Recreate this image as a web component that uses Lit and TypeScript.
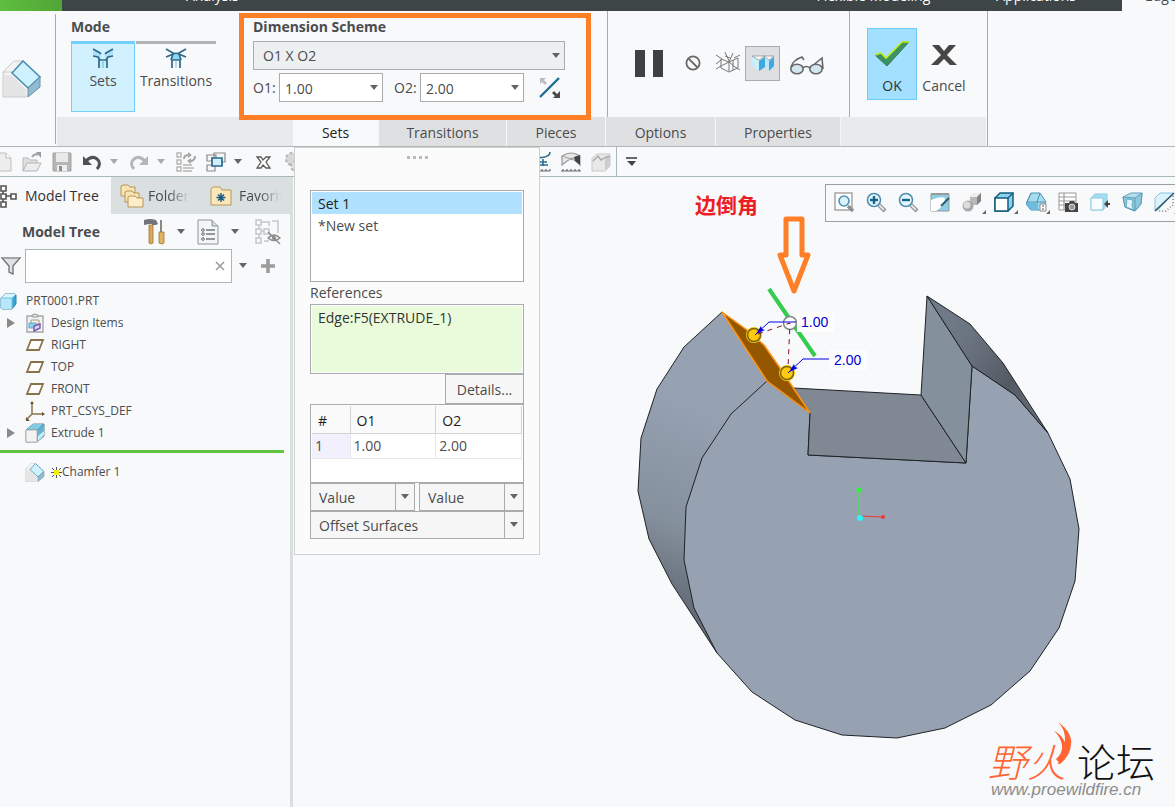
import { LitElement, html, svg, css, type TemplateResult } from "lit";
import { customElement, property, state } from "lit/decorators.js";
import { classMap } from "lit/directives/class-map.js";

interface IconDef {
  w: number;
  h: number;
  art: TemplateResult;
}

const glass = svg`<path d="M13 13l6 6" stroke="#8f8f8f" stroke-width="4"/><path d="M13 13l5 5" stroke="#e4e4e4" stroke-width="2"/><circle cx="8" cy="8" r="6.5" fill="#e6f6fd" stroke="#4d91b3" stroke-width="1.6"/>`;
const flyout = svg`<path d="M24 18v4h-4z" fill="#666"/>`;
const chamferBlock = svg`<path d="M1 12L12 1h9L37 17v13L25 37H1z" fill="#f3f3f4"/><path d="M2 13h8L26 28v9H2z" fill="#e5e5e6"/><path d="M1 12L12 1h9M1 12v25h24M1 12h9" fill="none" stroke="#c9cacb"/><path d="M3 14h7L25 29v6" fill="none" stroke="#fafafa" stroke-width="1.5"/><path d="M10 13L21 1l17 16-12 11z" fill="#cdf1ff" stroke="#4b8fae" stroke-width="1.6"/><path d="M26 28l12-11v10L26 37z" fill="#8dbdd2" stroke="#6f8f9c"/>`;

const ICONS: Record<string, IconDef> = {
  chamfer: { w: 40, h: 38, art: chamferBlock },
  caret: { w: 10, h: 6, art: svg`<path d="M1 0h8L5 5z" fill="#646464"/>` },
  caretDim: { w: 10, h: 6, art: svg`<path d="M1 0h8L5 5z" fill="#a9a9a9"/>` },
  sets: {
    w: 22, h: 20,
    art: svg`<path d="M1 1l8 4v5L1 8zM21 1l-8 4v5l8-2z" fill="#a9e2fa"/><path d="M7 12h8v8H7z" fill="#c3ecfc"/><path d="M1 1l7 4 1 1M1 8l5 1 2 3M21 1l-7 4-1 1M21 8l-5 1-2 3M7 20v-8h8v8" fill="none" stroke="#2d6a87" stroke-width="1.700"/><path d="M11 12v8" stroke="#7eb8d0"/>`,
  },
  transitions: {
    w: 22, h: 20,
    art: svg`<path d="M8 5l3 1 3-1 2 7H6z" fill="#8ed8f7"/><path d="M1 1l7 4q3 1 6 0l7-4M1 9l5-2 3-2M21 9l-5-2-3-2M7 20v-8h8v8M8 6l-2 6M14 6l2 6" fill="none" stroke="#2d6a87" stroke-width="1.700"/><path d="M11 12v8" stroke="#7eb8d0"/>`,
  },
  flip: {
    w: 22, h: 22,
    art: svg`<path d="M1 20L20 1" stroke="#1f6f93" stroke-width="2.4"/><path d="M1 1h6L5 3l3 3-2 2-3-3-2 2z" fill="#bdbdbd"/><path d="M21 21h-7l2-2-3-3 2-2 3 3 3-3z" fill="#4a4a4a"/>`,
  },
  pause: { w: 28, h: 27, art: svg`<path d="M0 0h10v27H0zM18 0h10v27H18z" fill="#3f4041"/>` },
  none: { w: 16, h: 16, art: svg`<circle cx="8" cy="8" r="6.6" fill="none" stroke="#686868" stroke-width="1.8"/><path d="M3.5 3.5l9 9" stroke="#686868" stroke-width="1.8"/>` },
  wire: {
    w: 24, h: 22,
    art: svg`<path d="M5 7l8 3 9-4M13 10v9M5 7v9l8 4 9-4V6M9 4l5 2M0 3l6 4M0 12l5-4M9 0l4 9M17 1l-4 9M24 3l-6 3M0 17l5-3 8-4M24 18l-5-3-6-5M17 8v10" fill="none" stroke="#777" stroke-width="1"/>`,
  },
  boxes: {
    w: 24, h: 18,
    art: svg`<path d="M1 2h13L8 6zM13 2h10l-5 4z" fill="#fff" stroke="#8a949a" stroke-width=".8"/><path d="M1 3l7 4v10l-7-6z" fill="#c9effc"/><path d="M8 7l6-4v10l-6 4z" fill="#3ea9dc"/><path d="M14 3l4 4v10l-4-4z" fill="#bce8fa"/><path d="M18 7l5-4v9l-5 5z" fill="#3ea9dc"/>`,
  },
  glasses: {
    w: 34, h: 20,
    art: svg`<path d="M1 12Q3 5 12 2l2 3M21 12l11-9 1 11" fill="none" stroke="#666" stroke-width="1.6"/><ellipse cx="7" cy="14" rx="6.2" ry="4.8" fill="#d2e6ef" stroke="#666" stroke-width="1.6"/><ellipse cx="26" cy="14" rx="6.2" ry="4.8" fill="#d2e6ef" stroke="#666" stroke-width="1.6"/><path d="M13 13q3-3 7 0" fill="none" stroke="#666" stroke-width="1.6"/>`,
  },
  ok: { w: 36, h: 26, art: svg`<path d="M1 14l5-2 6 5L28 1h7L13 25z" fill="#3b9460" stroke="#2b6b46" stroke-width=".8"/><path d="M1 14l6-2 5 5L28 1h7" fill="none" stroke="#c4ee1c" stroke-width="1.6"/>` },
  cancel: { w: 26, h: 20, art: svg`<path d="M1 0h7l5 6 5-6h7l-9 10 10 10h-7l-6-6-6 6H0l10-10z" fill="#474747"/>` },
  page: { w: 20, h: 20, art: svg`<path d="M2 1h12l5 5v13H2z" fill="#ededed" stroke="#bcbcbc"/><path d="M14 1v5h5" fill="#fff" stroke="#bcbcbc"/>` },
  open: { w: 20, h: 20, art: svg`<path d="M1 19V6h5l2 2h7v3" fill="#e0e0e0" stroke="#b5b5b5"/><path d="M1 19l4-8h14l-4 8z" fill="#ececec" stroke="#b5b5b5"/><path d="M10 5q3-4 6-2" fill="none" stroke="#9d9d9d" stroke-width="2"/><path d="M14 0h5v6z" fill="#9d9d9d"/>` },
  save: { w: 20, h: 20, art: svg`<path d="M1 1h18v18H1z" fill="#b5b5b5" stroke="#a3a3a3"/><path d="M4 1h12v9H4z" fill="#e9e9e9"/><path d="M5 13h10v6H5z" fill="#eee"/><path d="M7 14h3v5H7z" fill="#8e8e8e"/>` },
  undo: { w: 20, h: 20, art: svg`<path d="M4 9q6-6 11-2t0 10" fill="none" stroke="#4a5254" stroke-width="3"/><path d="M1 4v9h9z" fill="#4a5254"/>` },
  redo: { w: 20, h: 20, art: svg`<path d="M16 9Q10 3 5 7t0 10" fill="none" stroke="#b4b6b7" stroke-width="3"/><path d="M19 4v9h-9z" fill="#b4b6b7"/>` },
  regen: { w: 20, h: 20, art: svg`<path d="M1 1h4v4H1zM1 8h4v4H1zM1 15h4v4H1z" fill="none" stroke="#b5b5b5" stroke-width="1.4"/><path d="M7 13h9M7 16h11M7 19h9" stroke="#b5b5b5" stroke-width="1.6"/><path d="M8 7q0-4 5-4M19 4q0 5-5 5" fill="none" stroke="#a6a6a6" stroke-width="2"/><path d="M12 0l4 3-4 3zM15 6l-4 3 4 3z" fill="#a6a6a6"/>` },
  windows: { w: 20, h: 20, art: svg`<path d="M8 1h11v9H8zM1 3h9v6H1zM1 13h8v6H1z" fill="#f5f5f5" stroke="#8b8b8b" stroke-width="1.2"/><path d="M6 6h10v8H6z" fill="#d3effb" stroke="#256c8b" stroke-width="1.700"/>` },
  close: { w: 20, h: 20, art: svg`<path d="M4 5h4l2 3 3-3h4l-4 5 4 6h-4l-3-3-2 3H4l4-6z" fill="#fff" stroke="#5a5a5a" stroke-width="1.3"/>` },
  gear: { w: 20, h: 20, art: svg`<circle cx="9" cy="7" r="6" fill="#d8d8d8" stroke="#b5b5b5" stroke-width="2" stroke-dasharray="3 2"/><circle cx="13" cy="14" r="5" fill="#e4e4e4" stroke="#b5b5b5" stroke-width="2" stroke-dasharray="3 2"/>` },
  measure: { w: 20, h: 20, art: svg`<path d="M1 19h18M3 17v2M7 17v2M11 17v2M15 17v2M19 17v2" stroke="#666" stroke-width="1.2"/><path d="M4 6q15 0 15-6M8 10h8M12 7v7M6 13h11" fill="none" stroke="#2b6e8c" stroke-width="1.6"/>` },
  surface: { w: 20, h: 20, art: svg`<path d="M0 19h20M2 17v2M6 17v2M10 17v2M14 17v2M18 17v2" stroke="#666" stroke-width="1.2"/><path d="M1 4q9-6 18 0v9q-3-3-4-4-5-3-9 0l-5 4z" fill="#e6e6e6" stroke="#999" stroke-width="1.2"/><path d="M2 4q8 5 16 0" fill="none" stroke="#999"/><path d="M13 5l6-2v10l-5-4z" fill="#444"/>` },
  block: { w: 20, h: 20, art: svg`<path d="M1 6l5-4h13v12l-5 5H1z" fill="#e8e8e8" stroke="#c9c9c9"/><path d="M14 6l5-4v12l-5 5z" fill="#cdcdcd"/><path d="M2 9l5-5 3 4 5-3h4" fill="none" stroke="#aaa" stroke-width="1.4"/>` },
  more: { w: 12, h: 9, art: svg`<path d="M0 1h11" stroke="#444" stroke-width="1.6"/><path d="M1 4h9L6 9z" fill="#444"/>` },
  treeTab: { w: 18, h: 24, art: svg`<path d="M1 2h5v5H1zM1 10h5v5H1zM1 18h5v5H1zM11 10h5v5h-5zM3 7v3M3 15v3M6 12h5" fill="#fff" stroke="#555" stroke-width="1.6"/>` },
  folders: {
    w: 24, h: 24,
    art: svg`<path d="M1 12V2l2-1h5l2 2h5v9z" fill="#f9e3b0" stroke="#b8955a"/><path d="M5 18V8l2-1h5l2 2h5v9z" fill="#f9e3b0" stroke="#b8955a"/><path d="M8 23V13l2-1h5l2 2h6v9z" fill="#fdedc8" stroke="#b8955a"/>`,
  },
  favorite: { w: 22, h: 20, art: svg`<path d="M1 19V3l2-2h7l2 3h9v15z" fill="#fbe7ba" stroke="#b8955a"/><path d="M11 7v9M6.500 11.500h9M8 8.500l6 6M14 8.500l-6 6" stroke="#1e5f80" stroke-width="1.5"/>` },
  tools: { w: 22, h: 26, art: svg`<path d="M1 1q6-2 12 0l2 4-2 1H9V5H6L1 6z" fill="#6f747b"/><path d="M6 6h4v18l-2 1-2-1z" fill="#d9a95b" stroke="#9c7434" stroke-width=".8"/><path d="M18 1v12" stroke="#888" stroke-width="2"/><path d="M16 13h5v11l-2 1-3-1z" fill="#e3b364" stroke="#9c7434" stroke-width=".8"/>` },
  list: { w: 22, h: 26, art: svg`<path d="M1 1h14l6 6v18H1z" fill="#f1f6f8" stroke="#8b9498"/><path d="M15 1v6h6" fill="#cfdadf" stroke="#8b9498"/><path d="M9 11h9M9 15h9M9 20h9" stroke="#777" stroke-width="1.3"/><circle cx="6" cy="11" r="1.300" fill="#fff" stroke="#666"/><circle cx="6" cy="15" r="1.300" fill="#fff" stroke="#666"/><circle cx="6" cy="20" r="1.300" fill="#fff" stroke="#666"/>` },
  hideTree: { w: 26, h: 26, art: svg`<path d="M1 1h5v5H1zM1 10h5v5H1zM1 19h5v5H1zM9 10h5v5H9zM4 6v4M4 15v4M6 12h3M6 3h8v4M9 22h5M17 2h6v12" fill="none" stroke="#c4c6c7" stroke-width="1.5"/><path d="M13 19q6-6 12 0-6 5-12 0z" fill="#eee" stroke="#8a8a8a" stroke-width="1.4"/><circle cx="19" cy="19" r="2" fill="#8a8a8a"/><path d="M13 13l12 12" stroke="#8a8a8a" stroke-width="1.4"/>` },
  funnel: { w: 20, h: 18, art: svg`<path d="M1 1h18l-7 8v8l-4-2V9z" fill="#dfe2e3" stroke="#6d6f70" stroke-width="1.300"/><path d="M2 1h16" stroke="#bbb"/>` },
  clear: { w: 10, h: 10, art: svg`<path d="M1 1l8 8M9 1L1 9" stroke="#999" stroke-width="1.5"/>` },
  plus: { w: 14, h: 14, art: svg`<path d="M7 0v14M0 7h14" stroke="#9c9c9c" stroke-width="3.600"/>` },
  part: { w: 17, h: 17, art: svg`<path d="M1 5l4-4h10l1 1v9l-4 5H2l-1-1z" fill="#3aa6d2" stroke="#2f86ad"/><path d="M1 5h11v11H2l-1-1z" fill="#b5e8fb"/><path d="M1 5l4-4h11l-4 4z" fill="#dcf6ff"/><path d="M1 5h11v11" fill="none" stroke="#6ec2e3"/>` },
  expand: { w: 10, h: 12, art: svg`<path d="M1 1v10l8-5z" fill="#8a8a8a"/>` },
  items: { w: 20, h: 20, art: svg`<path d="M2 3h16v16H2z" fill="#f1f2f3" stroke="#a5a9ad" stroke-width="1.400"/><path d="M7 4V2l3-1 3 1v2z" fill="#ddd" stroke="#999"/><path d="M6 7h8v4H6z" fill="#f7f1df" stroke="#a7a08c"/><path d="M4 10h7v5H4z" fill="#8bd3f0" stroke="#4f9ec0" stroke-width=".8"/><path d="M9 13l6-2v4l-6 3z" fill="#e2d5f2" stroke="#7d5bb0" stroke-width="1.500"/>` },
  plane: { w: 20, h: 14, art: svg`<path d="M6 2h12l-4 10H2z" fill="#fff" stroke="#8a734b" stroke-width="1.800"/>` },
  csys: { w: 20, h: 20, art: svg`<path d="M7 1v12h12M7 13l-6 6" fill="none" stroke="#8a734b" stroke-width="1.500"/><path d="M5 3l2-3 2 3zM17 11l3 2-3 2zM1 16v4h4z" fill="#6e572e"/>` },
  extrude: { w: 20, h: 20, art: svg`<path d="M1 7l7-6h11v12l-7 6H1z" fill="#4d9fc1" stroke="#6f8791"/><path d="M2 6l6-5h10l-5 5z" fill="#86c9e3"/><path d="M13 7l6-5v10l-6 6z" fill="#69b4d3"/><path d="M13 13l6-5v4l-6 6z" fill="#c6effd"/><path d="M1 7h11v12H1z" fill="#f3f3f3" stroke="#b8b8b8"/>` },
  spark: { w: 11, h: 11, art: svg`<path d="M5.500 0v11M0 5.500h11M1 1l9 9M10 1l-9 9" stroke="#55556a" stroke-width="1"/><path d="M3 3h5v5H3z" fill="#f6f000"/>` },
  zoomFit: { w: 24, h: 22, art: svg`<path d="M1 1h17v17H1z" fill="#fff" stroke="#a5a5a5" stroke-width="1.500"/><path d="M14 14l5 5" stroke="#8f8f8f" stroke-width="3.500"/><circle cx="10" cy="9" r="5" fill="#d9f2fc" stroke="#4d91b3" stroke-width="1.600"/>` },
  zoomIn: { w: 24, h: 22, art: svg`${glass}<path d="M8 4v8M4 8h8" stroke="#17648a" stroke-width="2.400"/>` },
  zoomOut: { w: 24, h: 22, art: svg`${glass}<path d="M4 8h8" stroke="#17648a" stroke-width="2.400"/>` },
  repaint: { w: 24, h: 22, art: svg`<path d="M1 2h18v17H1z" fill="#8fcde2" stroke="#8d9aa0"/><path d="M1 19V8q9-4 14-2 0 8-9 13z" fill="#fff"/><path d="M11 14L19 6" stroke="#2b5e75" stroke-width="2"/><path d="M1 2h18" stroke="#9a9a9a" stroke-width="2"/>` },
  shading: { w: 24, h: 22, art: svg`<path d="M8 5l4-4h7v8l-4 4H8z" fill="#b9b9b9"/><path d="M8 5l4-4h7l-4 4z" fill="#eee"/><path d="M15 5l4-4v8l-4 4z" fill="#838383"/><circle cx="6" cy="14" r="5.500" fill="#a9a9a9"/><circle cx="5" cy="13" r="3.500" fill="#dcdcdc"/>${flyout}` },
  orient: { w: 24, h: 22, art: svg`<path d="M1 6l5-5h13v13l-5 5H1z" fill="#8bd2ee" stroke="#135c7c" stroke-width="1.500"/><path d="M1 6h13v13H1z" fill="#fff" stroke="#135c7c" stroke-width="1.500"/><path d="M14 6l5-5" stroke="#135c7c" stroke-width="1.500"/>${flyout}` },
  views: { w: 24, h: 22, art: svg`<path d="M5 1h9l6 9-4 8H5l-5-6z" fill="#a6dbf0" stroke="#4a96b5"/><path d="M5 1L1 10h10l3-9M11 10v8M1 10l4 8M11 10h8" fill="none" stroke="#4a96b5"/><path d="M1 11h10v7H5z" fill="#6cbddb"/><path d="M14 12h6v7h-6z" fill="#fff" stroke="#888"/><path d="M16 14h2M16 17h2" stroke="#555"/>${flyout}` },
  camera: { w: 24, h: 22, art: svg`<path d="M1 1h17v17H1z" fill="#fff" stroke="#999"/><path d="M1 5h17M1 9h17M1 13h17M6 1v17" stroke="#999" stroke-width="1.200"/><path d="M7 11h4l1-2h4l1 2h3v9H7z" fill="#444"/><circle cx="14" cy="15" r="3" fill="#999" stroke="#ddd"/>` },
  saved: { w: 24, h: 22, art: svg`<path d="M1 6l4-4h12v11l-4 5H1z" fill="#a5ddf2" stroke="#8fcce3"/><path d="M1 6h12v12H1z" fill="#f6fcff" stroke="#8fcce3"/><path d="M15 12h5" stroke="#444" stroke-width="2"/><path d="M14 12l4-4v8z" fill="#444"/>` },
  perspective: { w: 24, h: 22, art: svg`<path d="M1 5l8-4h11l-1 11-6 7-10-4z" fill="#b5dfee" stroke="#5c9db6"/><path d="M1 5l12 1 7-5-1 11-6 7-10-4z" fill="#8cc8de" stroke="#5c9db6"/><path d="M5 7l6 1-1 6 2 4-8-3z" fill="#dff3fa" stroke="#5c9db6" stroke-width=".8"/><path d="M13 6v13" stroke="#5c9db6"/>` },
  section: { w: 24, h: 22, art: svg`<path d="M1 6l5-5h13L4 18H1z" fill="#d9f2fc" stroke="#86c4dc"/><path d="M19 4v9l-7 6H4" fill="none" stroke="#999" stroke-dasharray="1 2" stroke-width="2"/><path d="M1 19L20 1" stroke="#2a5366" stroke-width="1.500"/>${flyout}` },
};

/** A fixed-size line-art icon, looked up by name. */
@customElement("cad-icon")
class CadIcon extends LitElement {
  @property() name = "";
  @property({ type: Number }) size = 0;

  static styles = css`
    :host { display: inline-flex; flex: none; }
    .art { display: block; }
  `;

  render() {
    const i = ICONS[this.name];
    const w = this.size || i.w;
    const h = Math.round((w * i.h) / i.w);
    return html`<svg class="art" width=${w} height=${h} viewBox="0 0 ${i.w} ${i.h}" aria-hidden="true">${i.art}</svg>`;
  }
}

/** The shaded part with its chamfer handles. */
@customElement("model-view")
class ModelView extends LitElement {
  static styles = css`
    :host { display: block; flex: 1; min-width: 0; }
    .scene { display: block; width: 100%; height: 100%; }
    .edge { stroke: #1f2226; stroke-width: 1; fill: none; }
    .face { stroke: #1f2226; stroke-width: 1; }
    .value { font: 14px "Liberation Sans", sans-serif; fill: #0000d0; }
    .leader { fill: none; stroke: #0000e6; stroke-width: 1; }
    .note { font: bold 21px "Noto Sans CJK SC", sans-serif; fill: #ed1c24; }
    .brand { font: 300 39px "Noto Sans CJK SC", sans-serif; fill: #111; }
    .fire { font-style: italic; fill: #ff6634; }
    .site { font: italic 17px "Liberation Sans", sans-serif; fill: #8c8c8c; }
  `;

  private handle(x: number, y: number) {
    return svg`<circle cx=${x} cy=${y} r="8" fill="#f7d21a"/><circle cx=${x} cy=${y} r="6.500" fill="#ffc90e" stroke="#7d6510" stroke-width="1.500"/>`;
  }

  render() {
    return html`<svg class="scene" viewBox="294 177 881 630" role="img" aria-label="Chamfered cylinder">
      <defs>
        <linearGradient id="side" gradientUnits="userSpaceOnUse" x1="730" y1="420" x2="655" y2="600">
          <stop offset="0" stop-color="#96a2b2"/><stop offset=".6" stop-color="#84909c"/><stop offset="1" stop-color="#626b76"/>
        </linearGradient>
        <linearGradient id="rim" gradientUnits="userSpaceOnUse" x1="940" y1="340" x2="1040" y2="400">
          <stop offset="0" stop-color="#707a87"/><stop offset=".35" stop-color="#656d79"/><stop offset=".7" stop-color="#545a64"/><stop offset="1" stop-color="#626a75"/>
        </linearGradient>
      </defs>
      <path d="M722 312L684 347 657 389 641 438 638 491 649 539 672 584 717 653 900 560 767 381z" fill="url(#side)"/>
      <path class="edge" d="M722 312L684 347 657 389 641 438 638 491 649 539 672 584 717 653"/>
      <path class="face" d="M767 381L731 414 702 458 686 507 684 560 694 608 717 653 752 692 795 720 842 735 897 738 945 728 991 705 1030 671 1059 628 1075 581 1079 529 1070 479 1048 433 1015 395 972 366 966 463 808 455 810 413z" fill="#96a2b2"/>
      <path class="face" d="M793 388L921 395 966 463 808 455 810 413z" fill="#7f8893"/>
      <path class="face" d="M927 296L972 366 966 463 921 395z" fill="#84909b"/>
      <path class="face" d="M927 296L970 324 1003 363 1048 433 1015 395 972 366z" fill="url(#rim)"/>
      <path d="M722 312L747 330 764 345 780 368 810 413 767 381z" fill="#945700" stroke="#ff9412" stroke-width="1.500"/>
      <path d="M769 289L815 356" stroke="#33cc4d" stroke-width="4"/>
      <circle cx="790" cy="323" r="6.500" fill="#fcfdfd" stroke="#85888a" stroke-width="1.500"/>
      <path d="M797 312h37v20h-37zM829 350h38v20h-38z" fill="#fdfdfe"/>
      ${this.handle(754, 335)}${this.handle(787, 373)}
      <path d="M758 334L790 323 788 368" fill="none" stroke="#8b0d1c" stroke-width="1" stroke-dasharray="5 5"/>
      <path class="leader" d="M796 322H769L755 335M829 359H803L788 373"/>
      <path d="M756 334l5-8 1 3 3 1zM789 372l5-8 1 3 3 1z" fill="#00e"/>
      <text class="value" x="801" y="327">1.00</text>
      <text class="value" x="834" y="365">2.00</text>
      <path d="M859 515V490" stroke="#2cf53a"/><circle cx="859" cy="490" r="2.500" fill="#2cf53a"/>
      <path d="M860 516l23 1" stroke="#f23535"/><circle cx="883" cy="517" r="2" fill="#f23535"/>
      <circle cx="860" cy="518" r="3" fill="#2cf5fa"/>
      <path d="M786 219H802V255H808L794 291 780 255H786z" fill="none" stroke="#ff7f27" stroke-width="5" stroke-linejoin="round"/>
      <text class="note" x="695" y="213">边倒角</text>
      <text class="brand fire" x="988" y="777">野火</text>
      <path d="M1058 722Q1073 733 1071 745 1070 756 1060 764L1056 759Q1063 753 1062 745 1060 736 1054 731 1061 734 1065 742 1066 730 1058 722z" fill="#ff6634"/>
      <text class="brand" x="1077" y="777">论坛</text>
      <text class="site" x="991" y="795">www.proewildfire.cn</text>
    </svg>`;
  }
}

const TREE = [
  { icon: "items", text: "Design Items", open: true },
  { icon: "plane", text: "RIGHT" },
  { icon: "plane", text: "TOP" },
  { icon: "plane", text: "FRONT" },
  { icon: "csys", text: "PRT_CSYS_DEF" },
  { icon: "extrude", text: "Extrude 1", open: true },
];

const QUICK = ["page", "open", "save", "undo", "caretDim", "redo", "caretDim", "regen", "windows", "caret", "close", "gear"];
const GRAPHICS = ["zoomFit", "zoomIn", "zoomOut", "repaint", "shading", "orient", "views", "camera", "saved", "perspective", "section"];

@customElement("app-root")
class AppRoot extends LitElement {
  @state() private tab = "Sets";

  static styles = css`
    :host { display: block; font: 14px/20px "Open Sans", sans-serif; color: #4a4c4d; }
    * { box-sizing: border-box; }
    button, input, select { font: inherit; color: inherit; margin: 0; padding: 0; border: 0; background: none; border-radius: 0; appearance: none; outline: none; }
    button { display: inline-flex; align-items: center; justify-content: center; flex: none; }
    .app { display: flex; flex-direction: column; min-height: 100vh; background: #f8f9fb; overflow: hidden; }
    .strong { font-weight: bold; }

    .menu { display: flex; height: 11px; overflow: hidden; background: #3e4546; color: #fff; align-items: flex-end; }
    .menu-item { line-height: 20px; color: inherit; text-decoration: none; white-space: nowrap; flex: none; margin-bottom: 5px; }
    .file { width: 62px; height: 11px; background: linear-gradient(90deg, #5fbf3f, #4fa535); flex: none; }
    .analysis { margin-left: 124px; }
    .flexible { margin-left: auto; }
    .apps { margin-left: 66px; margin-right: 46px; }
    .current { width: 53px; height: 11px; background: #f8f9fb; color: #4a4c4d; padding-left: 23px; display: flex; align-items: flex-end; flex: none; overflow: hidden; }

    .ribbon { display: flex; height: 136px; border-bottom: 1px solid #b0b5b5; }
    .feature { width: 56px; border-right: 1px solid #a9acae; margin: 3px 0 2px; display: flex; align-items: center; padding-left: 2px; flex: none; }
    .ribbon-main { width: 932px; border-right: 1px solid #a9acae; display: flex; flex-direction: column; padding-left: 1px; }
    .groups { display: flex; height: 106px; }
    .group { position: relative; padding-top: 6px; flex: none; }
    .g-mode { width: 183px; padding-left: 14px; }
    .g-scheme { width: 368px; padding-left: 13px; border-right: 1px solid #a9acae; }
    .marker { position: absolute; inset: 2px 16px -3px -1px; border: 5px solid #ff7f27; z-index: 2; pointer-events: none; }
    .g-tools { width: 242px; display: flex; align-items: center; padding: 0 0 2px 27px; border-right: 1px solid #a9acae; }
    .g-end { display: flex; padding: 17px 0 0 17px; }
    .title { font-weight: bold; line-height: 20px; }
    .modes { display: flex; margin-top: 4px; gap: 1px; }
    .mode { flex-direction: column; justify-content: flex-start; width: 80px; height: 71px; padding-top: 4px; gap: 3px; border-top: 3px solid #b1b3b4; }
    .mode.on { width: 64px; background: #d2f1ff; border: 1px solid #73cffd; border-top-width: 3px; }
    .fill { position: relative; display: flex; align-items: center; }
    .fill .tip { position: absolute; right: 4px; pointer-events: none; }
    .scheme { width: 312px; height: 29px; margin-top: 4px; }
    .scheme select { width: 100%; height: 100%; background: #edf0f1; border: 1px solid #a9acae; padding: 1px 0 0 9px; }
    .offsets { display: flex; align-items: center; margin-top: 3px; }
    .offsets label { width: 26px; white-space: nowrap; }
    .combo { width: 104px; }
    .combo input { width: 100%; height: 29px; background: #fff; border: 1px solid #a9acae; padding: 1px 0 0 5px; }
    .second { margin-left: 11px; }
    .flip { margin-left: 15px; }
    .t-none { margin-left: 22px; }
    .t-wire { margin-left: 15px; }
    .t-box { width: 35px; height: 35px; margin-left: 5px; background: #dedfe0; border: 1px solid #a9acae; }
    .t-glass { margin-left: 10px; padding-top: 4px; }
    .final { flex-direction: column; justify-content: flex-start; width: 50px; height: 72px; padding-top: 12px; gap: 9px; }
    .final.ok { background: #a3dfff; border: 1px solid #6fcbfa; color: #333; }
    .final.no { width: 54px; padding-top: 17px; gap: 11px; }
    .tabs { display: flex; height: 29px; background: #e9eaeb; padding-left: 236px; margin-right: 1px; }
    .tab { height: 29px; padding-top: 2px; background: #dfe0e1; border-right: 1px solid #f4f5f6; }
    .tab.on { background: #f8f9fb; color: #222; }
    .w86 { width: 86px; } .w128 { width: 128px; } .w99 { width: 99px; } .w110 { width: 110px; } .w125 { width: 125px; }

    .work { position: relative; flex: 1; display: flex; flex-direction: column; }
    .quick { display: flex; align-items: center; height: 30px; gap: 10px; border-bottom: 1px solid #a9b9b9; overflow: hidden; }
    .quick-btn:first-child { margin-left: -8px; }
    .quick-btn { width: 20px; }
    .quick-btn.small { width: 10px; margin-left: -3px; }
    .quick-btn.resume { margin-left: 218px; }
    .more { border-left: 1px solid #a9b9b9; height: 30px; padding-left: 9px; margin-left: -5px; }
    .main { flex: 1; display: flex; min-height: 630px; }

    .side { width: 294px; flex: none; border-right: 1px solid #f8f9fb; display: flex; }
    .side-body { flex: 1; min-width: 0; }
    .splitter { width: 3px; background: #d9dfdf; flex: none; }
    .side-tabs { display: flex; height: 37px; background: #dae0e0; }
    .side-tab { gap: 7px; justify-content: flex-start; height: 37px; overflow: hidden; white-space: nowrap; }
    .side-tab.on { width: 111px; background: #f8f9fb; color: #333; }
    .side-tab.folder { width: 88px; padding-left: 9px; gap: 4px; }
    .side-tab.fav { width: 82px; padding-left: 11px; }
    .fade { overflow: hidden; mask-image: linear-gradient(90deg, #000 50%, transparent); }
    .side-head { display: flex; align-items: center; height: 35px; padding-left: 22px; }
    .side-head .strong { flex: 1; }
    .side-head .hd { margin-right: 11px; }
    .side-head .hd2 { margin-right: 15px; }
    .side-head .last { margin-right: 9px; }
    .search { display: flex; align-items: center; height: 34px; padding-left: 1px; }
    .search .box { width: 207px; margin: 0 6px 0 4px; }
    .search input { width: 100%; height: 34px; border: 1px solid #a9b9b9; background: #fff; padding: 0 24px 0 6px; }
    .search .tip { right: 7px; pointer-events: auto; }
    .plus { margin-left: 13px; }
    .tree { list-style: none; margin: 0; padding: 7px 0 0; font-size: 12px; }
    .node { display: flex; align-items: center; height: 22px; white-space: nowrap; }
    .twist { width: 25px; padding-left: 6px; flex: none; display: flex; }
    .pic { width: 26px; flex: none; display: flex; }
    .insert { height: 3px; background: #62c440; margin: 6px 6px 8px 0; }

    .gfx { position: absolute; right: 0; top: 37px; width: 350px; height: 38px; display: flex; align-items: center; gap: 8px; padding-left: 8px; border: 1px solid #9c9fa1; border-right: 0; overflow: hidden; background: #f8f9fb; }

    .panel { position: absolute; left: 294px; top: 0; width: 246px; padding: 0 15px 15px; background: #fbfbfc; border: 1px solid #cdd1d2; z-index: 1; }
    .grip { display: flex; justify-content: center; gap: 3px; height: 42px; padding-top: 8px; }
    .dot { width: 3px; height: 3px; background: #b9bbbc; }
    .sets { list-style: none; margin: 0; padding: 1px; height: 92px; background: #fff; border: 1px solid #a9acae; }
    .set { display: flex; justify-content: flex-start; width: 100%; height: 22px; padding: 2px 0 0 6px; }
    .set.on { background: #b0e2ff; color: #222; }
    .caption { height: 22px; line-height: 22px; }
    .refs { height: 70px; padding: 1px; background: #fff; border: 1px solid #a9acae; }
    .ref { display: block; height: 100%; padding: 2px 6px; background: #eafbdc; color: #333; }
    .row-end { display: flex; justify-content: flex-end; }
    .details { width: 79px; height: 30px; padding-top: 2px; background: #f7f7f7; border: 1px solid #a9acae; }
    .grid { height: 79px; padding: 1px; background: #fff; border: 1px solid #a9acae; }
    .table { width: 100%; border-collapse: collapse; table-layout: fixed; }
    .table th { height: 27px; padding: 4px 0 0 6px; text-align: left; font-weight: normal; color: #222; background: #fafafa; border-right: 1px solid #d0d3d5; border-bottom: 1px solid #d0d3d5; }
    .table td { height: 25px; padding: 0 0 0 3px; border-right: 1px solid #e6e8ea; border-bottom: 1px solid #e6e8ea; }
    .table .num { width: 38px; }
    .table td.num { background: #f3f0fe; }
    .pair { display: flex; justify-content: space-between; }
    .drop { height: 28px; width: 105px; }
    .drop select { width: 100%; height: 28px; background: #f6f6f6; border: 1px solid #a9acae; padding: 2px 0 0 8px; }
    .drop .tip { right: 0; width: 20px; height: 28px; border-left: 1px solid #a9acae; display: flex; align-items: center; padding-left: 4px; }
    .drop.wide { width: 100%; }
  `;

  private combo(id: string, value: string) {
    return html`<div class="fill combo"><input id=${id} .value=${value} /><cad-icon class="tip" name="caret"></cad-icon></div>`;
  }

  private drop(label: string, wide = false) {
    return html`<div class=${classMap({ fill: true, drop: true, wide })}>
      <select aria-label=${label}><option>${label}</option></select>
      <span class="tip"><cad-icon name="caret"></cad-icon></span>
    </div>`;
  }

  private ribbonTab(name: string, width: string) {
    return html`<button class=${classMap({ tab: true, on: this.tab === name, [width]: true })} @click=${() => (this.tab = name)}>${name}</button>`;
  }

  private ribbon() {
    return html`<section class="ribbon">
      <div class="feature"><cad-icon name="chamfer"></cad-icon></div>
      <div class="ribbon-main">
        <div class="groups">
          <div class="group g-mode">
            <div class="title">Mode</div>
            <div class="modes">
              <button class="mode on"><cad-icon name="sets"></cad-icon>Sets</button>
              <button class="mode"><cad-icon name="transitions"></cad-icon>Transitions</button>
            </div>
          </div>
          <div class="group g-scheme">
            <div class="marker"></div>
            <label class="title" for="scheme">Dimension Scheme</label>
            <div class="fill scheme"><select id="scheme"><option>O1 X O2</option></select><cad-icon class="tip" name="caret"></cad-icon></div>
            <div class="offsets">
              <label for="o1">O1:</label>${this.combo("o1", "1.00")}
              <label class="second" for="o2">O2:</label>${this.combo("o2", "2.00")}
              <button class="flip" aria-label="Flip"><cad-icon name="flip"></cad-icon></button>
            </div>
          </div>
          <div class="group g-tools">
            <button aria-label="Pause"><cad-icon name="pause"></cad-icon></button>
            <button class="t-none" aria-label="No preview"><cad-icon name="none"></cad-icon></button>
            <button class="t-wire" aria-label="Unattached"><cad-icon name="wire"></cad-icon></button>
            <button class="t-box" aria-label="Attached"><cad-icon name="boxes"></cad-icon></button>
            <button class="t-glass" aria-label="Verify"><cad-icon name="glasses"></cad-icon></button>
          </div>
          <div class="group g-end">
            <button class="final ok"><cad-icon name="ok"></cad-icon>OK</button>
            <button class="final no"><cad-icon name="cancel"></cad-icon>Cancel</button>
          </div>
        </div>
        <div class="tabs">
          ${this.ribbonTab("Sets", "w86")}${this.ribbonTab("Transitions", "w128")}${this.ribbonTab("Pieces", "w99")}${this.ribbonTab("Options", "w110")}${this.ribbonTab("Properties", "w125")}
        </div>
      </div>
    </section>`;
  }

  private side() {
    return html`<aside class="side">
      <div class="side-body">
        <div class="side-tabs">
          <button class="side-tab on"><cad-icon name="treeTab"></cad-icon>Model Tree</button>
          <button class="side-tab folder"><cad-icon name="folders"></cad-icon><span class="fade">Folder</span></button>
          <button class="side-tab fav"><cad-icon name="favorite"></cad-icon><span class="fade">Favorites</span></button>
        </div>
        <div class="side-head">
          <span class="strong">Model Tree</span>
          <button class="hd" aria-label="Settings"><cad-icon name="tools"></cad-icon></button>
          <button class="hd" aria-label="Settings menu"><cad-icon name="caret"></cad-icon></button>
          <button class="hd" aria-label="Display"><cad-icon name="list"></cad-icon></button>
          <button class="hd2" aria-label="Display menu"><cad-icon name="caret"></cad-icon></button>
          <button class="last" aria-label="Hide tree"><cad-icon name="hideTree"></cad-icon></button>
        </div>
        <div class="search">
          <cad-icon name="funnel"></cad-icon>
          <div class="fill box"><input aria-label="Search" /><button class="tip" aria-label="Clear"><cad-icon name="clear"></cad-icon></button></div>
          <button aria-label="Search menu"><cad-icon name="caret"></cad-icon></button>
          <button class="plus" aria-label="Add"><cad-icon name="plus"></cad-icon></button>
        </div>
        <ul class="tree">
          <li class="node"><span class="pic"><cad-icon name="part"></cad-icon></span>PRT0001.PRT</li>
          ${TREE.map((n) => html`<li class="node">
            <span class="twist">${n.open ? html`<cad-icon name="expand"></cad-icon>` : ""}</span>
            <span class="pic"><cad-icon name=${n.icon}></cad-icon></span>${n.text}
          </li>`)}
          <li class="insert"></li>
          <li class="node"><span class="twist"></span><span class="pic"><cad-icon name="chamfer" size="20"></cad-icon></span><cad-icon name="spark"></cad-icon>Chamfer 1</li>
        </ul>
      </div>
      <div class="splitter"></div>
    </aside>`;
  }

  private panel() {
    return html`<section class="panel">
      <div class="grip">${[0, 1, 2, 3].map(() => html`<span class="dot"></span>`)}</div>
      <ul class="sets">
        <li><button class="set on">Set 1</button></li>
        <li><button class="set">*New set</button></li>
      </ul>
      <div class="caption">References</div>
      <div class="refs"><span class="ref">Edge:F5(EXTRUDE_1)</span></div>
      <div class="row-end"><button class="details">Details...</button></div>
      <div class="grid">
        <table class="table">
          <thead><tr><th class="num">#</th><th>O1</th><th>O2</th></tr></thead>
          <tbody><tr><td class="num">1</td><td>1.00</td><td>2.00</td></tr></tbody>
        </table>
      </div>
      <div class="pair">${this.drop("Value")}${this.drop("Value")}</div>
      ${this.drop("Offset Surfaces", true)}
    </section>`;
  }

  render() {
    return html`<div class="app">
      <nav class="menu">
        <span class="file"></span>
        <a class="menu-item analysis" href="#">Analysis</a>
        <a class="menu-item flexible" href="#">Flexible Modeling</a>
        <a class="menu-item apps" href="#">Applications</a>
        <span class="current"><a class="menu-item" href="#">Edge Chamfer</a></span>
      </nav>
      ${this.ribbon()}
      <div class="work">
        <div class="quick">
          ${QUICK.map((n) => html`<button class=${classMap({ "quick-btn": true, small: n.startsWith("caret") })} aria-label=${n}><cad-icon name=${n}></cad-icon></button>`)}
          <button class="quick-btn resume" aria-label="Measure"><cad-icon name="measure"></cad-icon></button>
          <button class="quick-btn" aria-label="Surface analysis"><cad-icon name="surface"></cad-icon></button>
          <button class="quick-btn" aria-label="Section"><cad-icon name="block"></cad-icon></button>
          <button class="more" aria-label="More"><cad-icon name="more"></cad-icon></button>
        </div>
        <div class="main">${this.side()}<model-view></model-view></div>
        <div class="gfx">${GRAPHICS.map((n) => html`<button aria-label=${n}><cad-icon name=${n}></cad-icon></button>`)}</div>
        ${this.panel()}
      </div>
    </div>`;
  }
}
